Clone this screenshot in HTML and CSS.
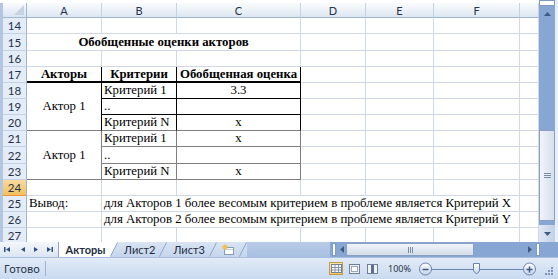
FILE: index.html
```html
<!DOCTYPE html>
<html lang="ru">
<head>
    <meta charset="UTF-8">
    <meta name="viewport" content="width=device-width, initial-scale=1.0">
    <title>Акторы</title>
    <link rel="stylesheet" href="styles.css">
</head>
<body>
<div class="window">
    <div class="main">
        <div class="sheet">
            <!-- заголовки столбцов -->
            <div class="corner"><svg width="10" height="10" viewBox="0 0 10 10"><path d="M10 0 L10 10 L0 10 Z" fill="#c8d3e2"/></svg></div>
            <div class="ch">A</div>
            <div class="ch">B</div>
            <div class="ch">C</div>
            <div class="ch">D</div>
            <div class="ch">E</div>
            <div class="ch">F</div>
            <div class="ch"></div>

            <!-- 14 -->
            <div class="rh">14</div>
            <div class="c"></div><div class="c"></div><div class="c"></div>
            <div class="c"></div><div class="c"></div><div class="c"></div><div class="c"></div>

            <!-- 15 -->
            <div class="rh">15</div>
            <div class="c span3 title">Обобщенные оценки акторов</div>
            <div class="c"></div><div class="c"></div><div class="c"></div><div class="c"></div>

            <!-- 16 -->
            <div class="rh">16</div>
            <div class="c"></div><div class="c"></div><div class="c"></div>
            <div class="c"></div><div class="c"></div><div class="c"></div><div class="c"></div>

            <!-- 17 -->
            <div class="rh">17</div>
            <div class="c head b-r b-bb">Акторы</div>
            <div class="c head b-r b-bb">Критерии</div>
            <div class="c head b-r b-bb">Обобщенная оценка</div>
            <div class="c"></div><div class="c"></div><div class="c"></div><div class="c"></div>

            <!-- 18 -->
            <div class="rh">18</div>
            <div class="c rows3 center b-r g-b">Актор 1</div>
            <div class="c b-r b-b">Критерий 1</div>
            <div class="c center b-r b-b">3.3</div>
            <div class="c"></div><div class="c"></div><div class="c"></div><div class="c"></div>

            <!-- 19 -->
            <div class="rh">19</div>
            <div class="c b-r b-b">..</div>
            <div class="c b-r b-b"></div>
            <div class="c"></div><div class="c"></div><div class="c"></div><div class="c"></div>

            <!-- 20 -->
            <div class="rh">20</div>
            <div class="c b-r g-b">Критерий N</div>
            <div class="c center b-r g-b">x</div>
            <div class="c"></div><div class="c"></div><div class="c"></div><div class="c"></div>

            <!-- 21 -->
            <div class="rh">21</div>
            <div class="c rows3 center g-r g-b">Актор 1</div>
            <div class="c g-r g-b">Критерий 1</div>
            <div class="c center g-r g-b">x</div>
            <div class="c"></div><div class="c"></div><div class="c"></div><div class="c"></div>

            <!-- 22 -->
            <div class="rh">22</div>
            <div class="c g-r g-b">..</div>
            <div class="c g-r g-b"></div>
            <div class="c"></div><div class="c"></div><div class="c"></div><div class="c"></div>

            <!-- 23 -->
            <div class="rh">23</div>
            <div class="c g-r g-b">Критерий N</div>
            <div class="c center g-r g-b">x</div>
            <div class="c"></div><div class="c"></div><div class="c"></div><div class="c"></div>

            <!-- 24 -->
            <div class="rh active">24</div>
            <div class="c"></div><div class="c"></div><div class="c"></div>
            <div class="c"></div><div class="c"></div><div class="c"></div><div class="c"></div>

            <!-- 25 -->
            <div class="rh">25</div>
            <div class="c">Вывод:</div>
            <div class="c span5">для Акторов 1 более весомым критерием в проблеме является Критерий X</div>
            <div class="c"></div>

            <!-- 26 -->
            <div class="rh">26</div>
            <div class="c"></div>
            <div class="c span5">для Акторов 2 более весомым критерием в проблеме является Критерий Y</div>
            <div class="c"></div>

            <!-- 27 -->
            <div class="rh">27</div>
            <div class="c"></div><div class="c"></div><div class="c"></div>
            <div class="c"></div><div class="c"></div><div class="c"></div><div class="c"></div>
        </div>

        <div class="vscroll">
            <div class="split-box"></div>
            <div class="arrow-btn"><svg width="7" height="4" viewBox="0 0 7 4"><path d="M0 4 L3.5 0 L7 4 Z" fill="#3f5a85"/></svg></div>
            <div class="track upper"></div>
            <div class="thumb"><svg width="7" height="5" viewBox="0 0 7 5"><path d="M0 0.5H7M0 2.5H7M0 4.5H7" stroke="#7a8ba6"/></svg></div>
            <div class="track lower"></div>
            <div class="arrow-btn down"><svg width="7" height="4" viewBox="0 0 7 4"><path d="M0 0 L3.5 4 L7 0 Z" fill="#3f5a85"/></svg></div>
        </div>
    </div>

    <div class="tabbar">
        <div class="tab-nav">
            <svg width="56" height="15" viewBox="0 0 56 15">
                <rect x="4" y="5" width="1.5" height="5" fill="#2f4f80"/>
                <path d="M10 5 L6 7.5 L10 10 Z" fill="#2f4f80"/>
                <path d="M25 5 L21 7.5 L25 10 Z" fill="#2f4f80"/>
                <path d="M34 5 L38 7.5 L34 10 Z" fill="#2f4f80"/>
                <path d="M47 5 L51 7.5 L47 10 Z" fill="#2f4f80"/>
                <rect x="51.5" y="5" width="1.5" height="5" fill="#2f4f80"/>
            </svg>
        </div>
        <div class="tab active">Акторы</div>
        <svg class="slant" width="8" height="15" viewBox="0 0 8 15"><path d="M0 15 L0 0 L8 0 Z" fill="#fff"/><path d="M0.5 14.5 L7.5 0.5" stroke="#8ea5c6"/></svg>
        <div class="tab">Лист2</div>
        <svg class="slant" width="8" height="15" viewBox="0 0 8 15"><path d="M0.5 14.5 L7.5 0.5" stroke="#8ea5c6"/></svg>
        <div class="tab">Лист3</div>
        <svg class="slant" width="8" height="15" viewBox="0 0 8 15"><path d="M0.5 14.5 L7.5 0.5" stroke="#8ea5c6"/></svg>
        <div class="tab new-sheet">
            <svg width="14" height="12" viewBox="0 0 14 12">
                <rect x="3.5" y="3.5" width="9" height="7" fill="#fff" stroke="#8a9bb5"/>
                <path d="M4 5.5 H12" stroke="#c4cfdf"/>
                <circle cx="4" cy="3" r="2.5" fill="#f5c04a"/>
            </svg>
        </div>
        <svg class="slant" width="8" height="15" viewBox="0 0 8 15"><path d="M0.5 14.5 L7.5 0.5" stroke="#8ea5c6"/></svg>
        <div class="tab-rest"></div>
        <div class="hscroll">
            <span class="hsplit"></span>
            <svg class="harrow" width="8" height="15" viewBox="0 0 8 15"><path d="M6 4 L2 7.5 L6 11 Z" fill="#3f5a85"/></svg>
            <div class="hthumb"><svg width="5" height="6" viewBox="0 0 5 6"><path d="M0.5 0V6M2.5 0V6M4.5 0V6" stroke="#7a8ba6"/></svg></div>
            <div class="htrack"></div>
            <svg class="harrow" width="8" height="15" viewBox="0 0 8 15"><path d="M2 4 L6 7.5 L2 11 Z" fill="#3f5a85"/></svg>
            <span class="hsplit end"></span>
        </div>
        <div class="corner-box"></div>
    </div>

    <div class="statusbar">
        <span class="status-text">Готово</span>
        <span class="status-sep"></span>
        <div class="status-right">
            <span class="view-btn on">
                <svg width="11" height="9" viewBox="0 0 11 9"><rect x="0.5" y="0.5" width="10" height="8" fill="#fff" stroke="#6f7f99"/><path d="M0.5 3.5H10.5M0.5 6H10.5M4 0.5V8.5M7.5 0.5V8.5" stroke="#8494ad"/></svg>
            </span>
            <span class="view-btn">
                <svg width="11" height="10" viewBox="0 0 11 10"><rect x="0.5" y="0.5" width="10" height="9" fill="#eef1f6" stroke="#6f7f99"/><rect x="2.5" y="2.5" width="6" height="5" fill="#fff" stroke="#9aa6b9"/></svg>
            </span>
            <span class="view-btn">
                <svg width="11" height="10" viewBox="0 0 11 10"><rect x="0.5" y="0.5" width="10" height="9" fill="#eef1f6" stroke="#6f7f99"/><rect x="4" y="1" width="3" height="8" fill="#5f6f8a"/></svg>
            </span>
            <span class="zoom-pct">100%</span>
            <svg class="zoom-slider" width="118" height="14" viewBox="0 0 118 14">
                <defs>
                    <linearGradient id="zg" x1="0" y1="0" x2="0" y2="1">
                        <stop offset="0" stop-color="#ffffff"/>
                        <stop offset="1" stop-color="#c3d3ea"/>
                    </linearGradient>
                </defs>
                <path d="M13 7.5 H104" stroke="#6d86ad"/>
                <path d="M58.5 4 V11" stroke="#6d86ad"/>
                <circle cx="6.5" cy="7" r="6" fill="url(#zg)" stroke="#6a83ad"/>
                <path d="M3.5 7.5 H9.5" stroke="#40577e" stroke-width="1.5"/>
                <circle cx="110.5" cy="7" r="6" fill="url(#zg)" stroke="#6a83ad"/>
                <path d="M107.5 7.5 H113.5 M110.5 4.5 V10.5" stroke="#40577e" stroke-width="1.5"/>
                <path d="M54.5 1.5 H60.5 V9 L57.5 12 L54.5 9 Z" fill="url(#zg)" stroke="#6a83ad"/>
            </svg>
            <svg class="grip" width="9" height="9" viewBox="0 0 9 9">
                <rect x="7" y="1" width="2" height="2" fill="#8095b5"/>
                <rect x="4" y="4" width="2" height="2" fill="#8095b5"/>
                <rect x="7" y="4" width="2" height="2" fill="#8095b5"/>
                <rect x="1" y="7" width="2" height="2" fill="#8095b5"/>
                <rect x="4" y="7" width="2" height="2" fill="#8095b5"/>
                <rect x="7" y="7" width="2" height="2" fill="#8095b5"/>
            </svg>
        </div>
    </div>
</div>
</body>
</html>
```

FILE: styles.css
```css
body {
    margin: 0;
    width: 558px;
    height: 279px;
    overflow: hidden;
    background-color: #fff;
}
.window {
    display: flex;
    flex-direction: column;
    width: 558px;
    height: 279px;
}
.main {
    display: flex;
    height: 242px;
}

/* сетка листа */
.sheet {
    display: grid;
    grid-template-columns: 24px 75px 75px 124px 65px 68px 86px 19px;
    grid-template-rows: 15px 16px 17px 16px 16px 16px 16px 16px 16px 17px 16px 16px 16px 16px 16px;
    width: 536px;
    height: 239px;
    margin-top: 3px;
    border-left: 3px solid #b3c6e1;
    overflow: hidden;
    font-family: "Liberation Serif", "Times New Roman", serif;
    font-size: 12.8px;
    color: #000;
}
.corner {
    display: flex;
    align-items: flex-end;
    justify-content: flex-end;
    padding: 0 2px 2px 0;
    background: linear-gradient(#f9fbfd, #dbe4f1);
    border-right: 1px solid #9eb6ce;
    border-bottom: 1px solid #9eb6ce;
    box-sizing: border-box;
}
.corner svg {
    display: block;
}
.ch {
    display: flex;
    align-items: center;
    justify-content: center;
    background: linear-gradient(#f9fcfd, #dde6f2);
    border-right: 1px solid #c5d2e3;
    border-bottom: 1px solid #9eb6ce;
    box-sizing: border-box;
    font-family: "Lato", "Liberation Sans", sans-serif;
    font-size: 11px;
    color: #24324a;
}
.rh {
    display: flex;
    align-items: center;
    justify-content: center;
    background-color: #e4ecf7;
    border-right: 1px solid #9eb6ce;
    border-bottom: 1px solid #c5d2e3;
    box-sizing: border-box;
    font-family: "Lato", "Liberation Sans", sans-serif;
    font-size: 11.5px;
    color: #24324a;
}
.rh.active {
    background: linear-gradient(#f9d99f, #f1c15f);
    border-bottom-color: #f29536;
}
.c {
    display: flex;
    align-items: flex-end;
    padding: 0 2px 1px;
    border-right: 1px solid #d0d7e5;
    border-bottom: 1px solid #d0d7e5;
    box-sizing: border-box;
    line-height: 14px;
    white-space: nowrap;
    overflow: hidden;
}
.center {
    justify-content: center;
}
.span3 {
    grid-column: span 3;
}
.span5 {
    grid-column: span 5;
}
.rows3 {
    grid-row: span 3;
    align-items: center;
}
.title {
    justify-content: center;
    font-weight: bold;
}
.head {
    justify-content: center;
    align-items: center;
    padding-bottom: 0;
    font-weight: bold;
    line-height: 13px;
    overflow: visible;
}

/* границы таблицы */
.b-r { border-right-color: #000; }
.b-b { border-bottom-color: #000; }
.b-bb { border-bottom: 2px solid #000; }
.g-r { border-right-color: #7f7f7f; }
.g-b { border-bottom-color: #7f7f7f; }

/* вертикальная прокрутка */
.vscroll {
    display: flex;
    flex-direction: column;
    width: 16px;
    border-right: 3px solid #e9eff8;
    background-color: #88a6d3;
}
.split-box {
    height: 4px;
    background-color: #fff;
    border: 1px solid #7f9bc4;
}
.arrow-btn {
    display: flex;
    align-items: center;
    justify-content: center;
    height: 15px;
}
.arrow-btn.down {
    height: 17px;
    background: linear-gradient(90deg, #dfe7f3, #c2d1e8);
}
.track.upper {
    flex: 1;
}
.track.lower {
    height: 4px;
}
.thumb {
    display: flex;
    align-items: center;
    justify-content: center;
    height: 91px;
    background: linear-gradient(90deg, #f1f4f9, #d6dfec);
    border: 1px solid #8aa0c2;
    box-sizing: border-box;
}

/* ярлыки листов */
.tabbar {
    display: flex;
    height: 15px;
    font-family: "Lato", "Liberation Sans", sans-serif;
    font-size: 11px;
    color: #1e2b40;
    background: linear-gradient(#d9e4f3, #c4d5ec);
}
.tab-nav {
    width: 58px;
    background: linear-gradient(#f4f7fb, #dbe5f2);
}
.tab-nav svg {
    display: block;
}
.tab {
    display: flex;
    align-items: center;
    padding: 0 4px 0 6px;
    line-height: 15px;
}
.tab.active {
    width: 52px;
    background-color: #fff;
    font-weight: bold;
    justify-content: center;
    border-left: 1px solid #8ea5c6;
    box-sizing: border-box;
}
.new-sheet {
    padding: 0 4px;
}
.slant {
    display: block;
    flex: none;
}
.tab-rest {
    flex: 1;
    background: linear-gradient(#b8cbe7, #a9c0e2);
}
.hscroll {
    display: flex;
    align-items: center;
    width: 212px;
    background-color: #88a6d3;
}
.hsplit {
    width: 2px;
    height: 11px;
    margin: 0 2px;
    background-color: #fff;
    border: 1px solid #7f9bc4;
}
.harrow {
    display: block;
}
.hthumb {
    display: flex;
    align-items: center;
    justify-content: center;
    width: 128px;
    height: 13px;
    background: linear-gradient(#f1f4f9, #d3dcea);
    border: 1px solid #8aa0c2;
    box-sizing: border-box;
}
.htrack {
    flex: 1;
}
.corner-box {
    width: 16px;
    background-color: #88a6d3;
}

/* строка состояния */
.statusbar {
    display: flex;
    align-items: center;
    height: 22px;
    background: linear-gradient(#e2ebf7, #c9daf0);
    border-top: 1px solid #a9bfdf;
    box-sizing: border-box;
    font-family: "Noto Sans", "Liberation Sans", sans-serif;
    font-size: 11px;
    color: #273448;
}
.status-text {
    padding-left: 4px;
}
.status-sep {
    width: 1px;
    height: 15px;
    margin-left: 5px;
    background-color: #9db3d4;
}
.status-right {
    display: flex;
    align-items: center;
    margin-left: auto;
    padding-right: 5px;
}
.view-btn {
    display: flex;
    align-items: center;
    justify-content: center;
    width: 14px;
    height: 13px;
    margin-right: 4px;
}
.view-btn.on {
    background: linear-gradient(#ffe9a8, #ffcf5a);
    border: 1px solid #c29b48;
    box-sizing: border-box;
}
.zoom-pct {
    margin: 0 8px 0 5px;
    font-size: 9px;
}
.zoom-slider {
    display: block;
}
.grip {
    display: block;
    margin-left: 7px;
    margin-top: 4px;
}
```
